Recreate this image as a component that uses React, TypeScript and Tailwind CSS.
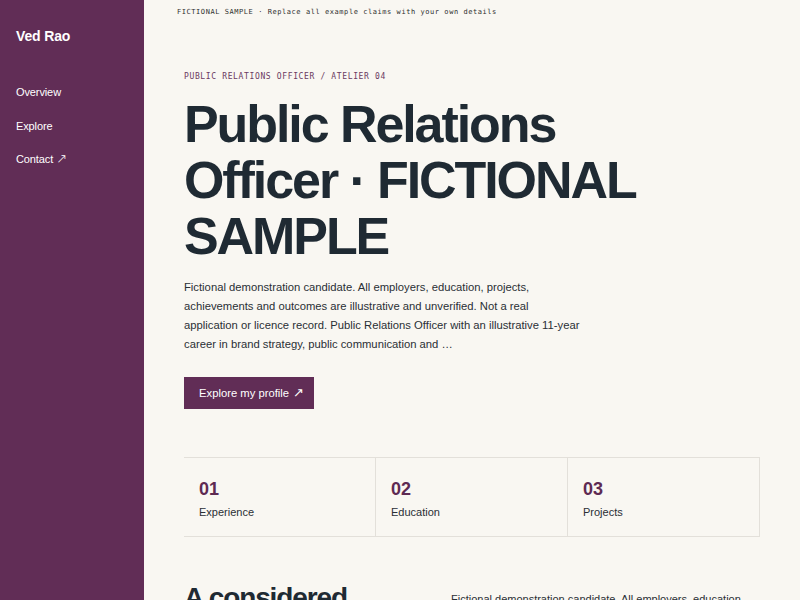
import React from "react";

const sans = { fontFamily: '"Liberation Sans", Arial, Helvetica, sans-serif' };

export default function App() {
  return (
    <div
      className="flex min-h-screen bg-[#f9f7f2] text-[#1f2a33] font-['Liberation_Sans',Arial,sans-serif]"
      style={sans}
    >
      <aside className="w-[144px] shrink-0 bg-[#612d56] px-4 pt-[26px] text-white">
        <div className="text-[14px] font-bold leading-[20px] tracking-[-0.01em]">Ved Rao</div>
        <nav className="mt-[38px] flex flex-col gap-[17.5px] text-[11px] leading-[16px] tracking-[-0.01em]">
          <a className="block">Overview</a>
          <a className="block">Explore</a>
          <a className="flex items-center gap-[3px]">
            Contact <span className="font-['DejaVu_Sans',sans-serif] text-[13px] font-light leading-[16px]">↗</span>
          </a>
        </nav>
      </aside>

      <main className="flex-1 min-w-0">
        <div className="pl-[33px] pt-[7px] font-['DejaVu_Sans_Mono',monospace] text-[7px] leading-[10px] tracking-[0.08em] text-[#2f2f2f]">
          FICTIONAL SAMPLE · Replace all example claims with your own details
        </div>

        <section className="px-10 pt-[54px]">
          <div className="font-['DejaVu_Sans_Mono',monospace] text-[8px] leading-[12px] tracking-[0.08em] text-[#6b3a61]">
            PUBLIC RELATIONS OFFICER / ATELIER 04
          </div>
          <h1 className="mt-[13px] max-w-[480px] text-[52px] font-bold leading-[1.08] tracking-[-0.04em] text-[#1f2a33]">
            Public Relations Officer · FICTIONAL SAMPLE
          </h1>
          <p className="mt-[14px] max-w-[400px] text-[11.25px] leading-[18.7px] text-[#2a2f35]">
            Fictional demonstration candidate. All employers, education, projects, achievements and
            outcomes are illustrative and unverified. Not a real application or licence record.
            Public Relations Officer with an illustrative 11-year career in brand strategy, public
            communication and …
          </p>
          <button className="mt-[24px] flex h-[32px] w-[130px] items-center bg-[#612d56] pl-[15px] text-[11.25px] text-white">
            Explore my profile
            <span className="ml-[4px] font-['DejaVu_Sans',sans-serif] text-[13px] leading-[16px]">↗</span>
          </button>

          <div className="mt-[48px] grid grid-cols-3 border-y border-[#e3e0da]">
            {[
              ["01", "Experience"],
              ["02", "Education"],
              ["03", "Projects"],
            ].map(([n, l]) => (
              <div key={n} className="border-r border-[#e3e0da] px-[15px] pt-[20px] pb-[16px]">
                <div className="text-[18px] font-bold leading-[22px] text-[#5e2a52]">{n}</div>
                <div className="mt-[4px] text-[11px] leading-[16px] text-[#2a2f35]">{l}</div>
              </div>
            ))}
          </div>

          <div className="mt-[46px] grid grid-cols-[235px_1fr] gap-8 pb-10">
            <h2 className="text-[28px] font-bold leading-[1.1] tracking-[-0.04em] text-[#1f2a33]">
              A considered approach
            </h2>
            <p className="pt-[7px] text-[11px] leading-[18px] text-[#2a2f35]">
              Fictional demonstration candidate. All employers, education, projects, achievements
              and outcomes are illustrative and unverified.
            </p>
          </div>
        </section>
      </main>
    </div>
  );
}
